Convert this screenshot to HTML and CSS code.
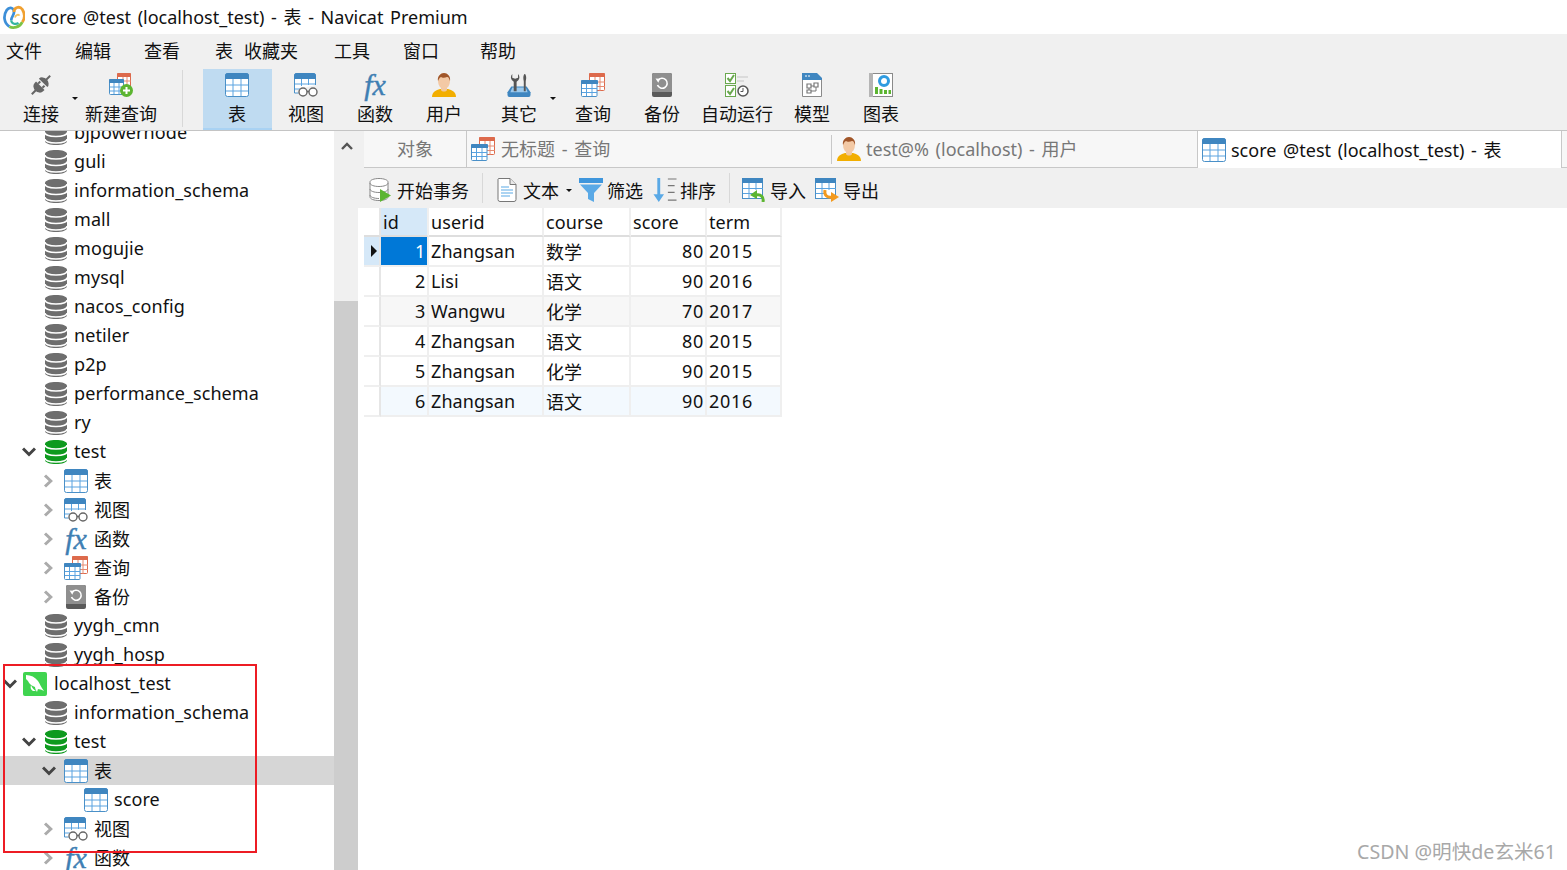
FILE: index.html
```html
<!DOCTYPE html>
<html lang="zh-CN">
<head>
<meta charset="utf-8">
<title>score @test (localhost_test) - 表 - Navicat Premium</title>
<link rel="stylesheet" href="styles.css">
</head>
<body>
<svg class="defs" aria-hidden="true">
  <symbol id="logo" viewBox="0 0 24 26">
    <path d="M7 23C1 19 0 11 4 5c3-4 8-3 8 2 0 4-3 5-3 9" fill="none" stroke="#3d8fd8" stroke-width="3"/>
    <path d="M12 7c0-5 6-7 9-3 3 5 3 10 0 14" fill="none" stroke="#f0a030" stroke-width="3"/>
    <path d="M21 18c-3 6-10 7-14 5" fill="none" stroke="#7cc444" stroke-width="3"/>
    <path d="M9 16c0 4 5 5 8 3" fill="none" stroke="#35b5a0" stroke-width="2.4"/>
    <path d="M13 13c1-3 4-4 5-2" fill="none" stroke="#f6c560" stroke-width="2"/>
  </symbol>
  <symbol id="tb" viewBox="0 0 24 24">
    <rect x=".5" y=".5" width="23" height="23" rx="2" fill="#fff" stroke="#4a90c8"/>
    <path d="M0 3a3 3 0 0 1 3-3h18a3 3 0 0 1 3 3v3H0z" fill="#3f86c0"/>
    <path d="M1 12h22M1 18h22M8 6v17M16 6v17" stroke="#5aa3e0" fill="none"/>
  </symbol>
  <symbol id="vw" viewBox="0 0 24 24">
    <path d="M.5 17V2.500a2 2 0 0 1 2-2h17a2 2 0 0 1 2 2V12M.5 17v3h4" fill="#fff" stroke="#4a90c8"/>
    <path d="M0 3a3 3 0 0 1 3-3h16a3 3 0 0 1 3 3v3H0z" fill="#3f86c0"/>
    <path d="M1 11h20M1 16h5M7.500 6v7M14.500 6v6" stroke="#5aa3e0" fill="none"/>
    <circle cx="9" cy="19" r="4" fill="#fff" stroke="#666" stroke-width="1.400"/>
    <circle cx="19" cy="19" r="4" fill="#fff" stroke="#666" stroke-width="1.400"/>
    <path d="M13 18.500h2" stroke="#666" stroke-width="1.400"/>
  </symbol>
  <symbol id="qr" viewBox="0 0 24 24">
    <rect x="8.500" y=".5" width="15" height="17" rx="1" fill="#fff" stroke="#dd6a4c"/>
    <path d="M8 1a1 1 0 0 1 1-1h14a1 1 0 0 1 1 1v3H8z" fill="#dd6a4c"/>
    <path d="M8 9h16M8 13.500h16M14 4v14M19 4v14" stroke="#e58a70" fill="none"/>
    <rect x=".5" y="7.500" width="15.500" height="16" rx="1" fill="#fff" stroke="#4a90c8"/>
    <path d="M0 8a1 1 0 0 1 1-1h15a1 1 0 0 1 1 1v3H0z" fill="#3f86c0"/>
    <path d="M1 15.500h15M1 19.500h15M5.500 11v12M11 11v12" stroke="#5aa3e0" fill="none"/>
  </symbol>
  <symbol id="nq" viewBox="0 0 24 24">
    <rect x="8.500" y=".5" width="13" height="14" rx="1" fill="#fff" stroke="#dd6a4c"/>
    <path d="M8 1a1 1 0 0 1 1-1h12a1 1 0 0 1 1 1v3H8z" fill="#dd6a4c"/>
    <path d="M8 8h14M14 4v10M18 4v10" stroke="#e58a70" fill="none"/>
    <rect x=".5" y="6.500" width="14" height="15" rx="1" fill="#fff" stroke="#4a90c8"/>
    <path d="M0 7a1 1 0 0 1 1-1h13a1 1 0 0 1 1 1v3H0z" fill="#3f86c0"/>
    <path d="M1 14h13M1 18h13M5 10v11M10 10v11" stroke="#5aa3e0" fill="none"/>
    <circle cx="17.500" cy="17.500" r="6.500" fill="#5cb531"/>
    <path d="M14 17.500h7M17.500 14v7" stroke="#fff" stroke-width="2"/>
  </symbol>
  <symbol id="bk" viewBox="0 0 20 24">
    <rect width="20" height="24" rx="2" fill="#5a5a5a"/>
    <path d="M0 2a2 2 0 0 1 2-2h16a2 2 0 0 1 2 2v17H0z" fill="#8f8f8f"/>
    <path d="M6 7.500a5 5 0 1 1-.5 4.500" fill="none" stroke="#fff" stroke-width="1.600"/>
    <path d="M3.500 5.500l4.500.3-1.700 4z" fill="#fff"/>
  </symbol>
  <symbol id="db" viewBox="0 0 22 24">
    <path d="M0 4c0-2.500 5-4 11-4s11 1.500 11 4v16c0 2.500-5 4-11 4S0 22.500 0 20z" fill="currentColor"/>
    <path d="M0 5c0 2.500 5 4 11 4s11-1.500 11-4M0 11.500c0 2.500 5 4 11 4s11-1.500 11-4M0 18c0 2.500 5 4 11 4s11-1.500 11-4" fill="none" stroke="#fff" stroke-width="1.500"/>
  </symbol>
  <symbol id="ms" viewBox="0 0 24 24">
    <rect width="24" height="24" rx="2" fill="#3fd44f"/>
    <path d="M3 3c5 0 9 2 12 6 2 3 3 6 6 10-3-2-4-1-6-2l-1 3c-1-2-2-3-2-5-3-1-6-3-7-6L3 7z" fill="#fff"/>
    <path d="M8 13c1 3 3 5 5 6l-3 0c-2-1-3-3-2-6z" fill="#fff"/>
  </symbol>
  <symbol id="us" viewBox="0 0 24 24">
    <path d="M0 24c0-5 4-7 8-8h8c4 1 8 3 8 8z" fill="#f2ae00"/>
    <path d="M9 13h6v4c-1 2-5 2-6 0z" fill="#f0c8a0"/>
    <ellipse cx="12" cy="8" rx="6" ry="8" fill="#f3c9a5"/>
    <path d="M6 8C5 3 9 0 12 0s7 3 6 8c-1-2-1-4-3-4-2 1-5 1-6 0-2 1-2 2-3 4z" fill="#a0562a"/>
  </symbol>
  <symbol id="pl" viewBox="0 0 24 24">
    <g transform="rotate(-45 12 12)" fill="#666">
      <rect x="-1" y="11" width="6" height="2"/>
      <path d="M4 12a5 6 0 0 1 5-6h2v12H9a5 6 0 0 1-5-6z"/>
      <rect x="11" y="8" width="3" height="2"/>
      <rect x="11" y="14" width="3" height="2"/>
      <path d="M15 6a5 6 0 0 1 0 12z"/>
      <rect x="19" y="11" width="6" height="2"/>
    </g>
  </symbol>
  <symbol id="ot" viewBox="0 0 24 25">
    <path d="M4 14h16l4 6v3a2 2 0 0 1-2 2H2a2 2 0 0 1-2-2v-3z" fill="#3f86c0"/>
    <path d="M5 15h14l2 5H3z" fill="#9cc9ec"/>
    <path d="M5 1a5 5 0 0 0 1.500 8V19h3V9A5 5 0 0 0 11 1v4l-3 1-3-1z" fill="#555"/>
    <path d="M16.500 5c0-2 .7-4 1.500-4s1.500 2 1.500 4-.5 3-.5 4v10h-2V9c0-1-.5-2-.5-4z" fill="#555"/>
  </symbol>
  <symbol id="au" viewBox="0 0 24 24">
    <rect x=".5" y=".5" width="10" height="10" fill="#fff" stroke="#6aa84f"/>
    <rect x=".5" y="12.500" width="10" height="11" fill="#fff" stroke="#6aa84f"/>
    <path d="M2.500 5l2.500 3 4-6M2.500 18l2.500 3 4-6" fill="none" stroke="#6aa84f" stroke-width="2"/>
    <path d="M12 4h11M12 8h7" stroke="#d4d4d4" stroke-width="1.500"/>
    <circle cx="18" cy="18" r="5" fill="#fff" stroke="#555" stroke-width="1.500"/>
    <path d="M18 15v3.500h-2.500" fill="none" stroke="#555"/>
  </symbol>
  <symbol id="md" viewBox="0 0 20 24">
    <path d="M.5.500h14l5 5v18H.5z" fill="#fff" stroke="#8a8a8a"/>
    <path d="M0 0h15l5 5v2H0z" fill="#3f86c0"/>
    <path d="M3 3h2M6 3h2" stroke="#fff"/>
    <path d="M5 11h4v4H5zM12 10h4v4h-4zM5 17h4v3H5z" fill="none" stroke="#777" stroke-width="1.200"/>
    <path d="M9 13h3M7 15v2M14 14v4H9" fill="none" stroke="#777"/>
  </symbol>
  <symbol id="ch" viewBox="0 0 24 24">
    <rect x=".5" y=".5" width="23" height="23" fill="#fff" stroke="#8a8a8a"/>
    <rect x="0" y="0" width="4" height="24" fill="#b5b5b5"/>
    <circle cx="15" cy="8" r="4.500" fill="none" stroke="#2f9be0" stroke-width="3"/>
    <path d="M6 21v-7h3v7zM10.500 21v-5h3v5zM15 21v-4h3v4zM19.500 21v-4h2.500v4z" fill="#5cb531"/>
  </symbol>
  <symbol id="tr" viewBox="0 0 22 24">
    <path d="M1 4c0-2 4-3.500 9-3.500S19 2 19 4v15c0 2-4 3.500-9 3.500S1 21 1 19z" fill="#fff" stroke="#888"/>
    <path d="M1 5c0 2 4 3.500 9 3.500S19 7 19 5M1 11c0 2 4 3.500 9 3.500S19 13 19 11M1 17c0 2 4 3.500 9 3.500" fill="none" stroke="#888"/>
    <path d="M11 11l11 6.500L11 24z" fill="#5cb531"/>
  </symbol>
  <symbol id="dc" viewBox="0 0 20 24">
    <path d="M1.500.500H13l6 6V21.500a2 2 0 0 1-2 2H3a2 2 0 0 1-2-2V1z" fill="#fff" stroke="#777"/>
    <path d="M13 .5v6h6" fill="#e8e8e8" stroke="#777"/>
    <path d="M4 9h8M4 12h12M4 15h12M4 18h9" stroke="#5aa9e6" stroke-width="1.200"/>
  </symbol>
  <symbol id="fl" viewBox="0 0 24 24">
    <path d="M0 0h24v5H0z" fill="#3f96dc"/>
    <path d="M1 6.500h22l-8 8.500v9l-6-3v-6z" fill="#5aa9e6"/>
  </symbol>
  <symbol id="so" viewBox="0 0 24 25">
    <path d="M4 0h3v17h4l-5.500 8L0 17h4z" fill="#5aa9e6"/>
    <path d="M15 1h9M15 8h7M15 15h7M15 23h9" stroke="#777" stroke-width="1.200"/>
  </symbol>
  <symbol id="im" viewBox="0 0 24 24">
    <rect x=".5" y=".5" width="20" height="20" fill="#fff" stroke="#4a90c8"/>
    <path d="M0 0h21v5H0z" fill="#3f86c0"/>
    <path d="M1 10.500h20M1 15.500h10M7 5v15M14 5v7" stroke="#5aa3e0" fill="none"/>
    <path d="M21 24c1-5-2-8-7-7" fill="none" stroke="#5cb531" stroke-width="3"/>
    <path d="M8 17l7-5v9z" fill="#5cb531"/>
  </symbol>
  <symbol id="ex" viewBox="0 0 24 24">
    <rect x=".5" y=".5" width="20" height="20" fill="#fff" stroke="#4a90c8"/>
    <path d="M0 0h21v5H0z" fill="#3f86c0"/>
    <path d="M1 10.500h20M1 15.500h8M7 5v15M14 5v7" stroke="#5aa3e0" fill="none"/>
    <path d="M10 12c-1 5 2 8 7 7" fill="none" stroke="#f39a1e" stroke-width="3"/>
    <path d="M24 19l-8-5v10z" fill="#f39a1e"/>
  </symbol>
  <symbol id="cr" viewBox="0 0 14 14">
    <path d="M3 1.500L8.800 7 3 12.500" fill="none" stroke="#ababab" stroke-width="3"/>
  </symbol>
  <symbol id="cd" viewBox="0 0 14 14">
    <path d="M1 3.500L7 9.500l6-6" fill="none" stroke="#444" stroke-width="3"/>
  </symbol>
</svg>

<div class="app">
  <header class="title">
    <svg class="logo"><use href="#logo"/></svg>
    <span>score @test (localhost_test) - 表 - Navicat Premium</span>
  </header>

  <nav class="menu">
    <span>文件</span><span>编辑</span><span>查看</span><span>表</span><span>收藏夹</span><span>工具</span><span>窗口</span><span>帮助</span>
  </nav>

  <div class="toolbar">
    <div class="tool w68"><svg class="ti"><use href="#pl"/></svg><span>连接</span><i class="tri tri-a"></i></div>
    <div class="tool w84 ml4"><svg class="ti"><use href="#nq"/></svg><span>新建查询</span></div>
    <div class="tsep"></div>
    <div class="tool w69 active"><svg class="ti"><use href="#tb"/></svg><span>表</span></div>
    <div class="tool w69"><svg class="ti"><use href="#vw"/></svg><span>视图</span></div>
    <div class="tool w69"><i class="fx ti">fx</i><span>函数</span></div>
    <div class="tool w69"><svg class="ti"><use href="#us"/></svg><span>用户</span></div>
    <div class="tool w80"><svg class="ti"><use href="#ot"/></svg><span>其它</span><i class="tri tri-b"></i></div>
    <div class="tool w68"><svg class="ti"><use href="#qr"/></svg><span>查询</span></div>
    <div class="tool w68 nudge"><svg class="ti"><use href="#bk"/></svg><span>备份</span></div>
    <div class="tool w84"><svg class="ti"><use href="#au"/></svg><span>自动运行</span></div>
    <div class="tool w66"><svg class="ti"><use href="#md"/></svg><span>模型</span></div>
    <div class="tool w72"><svg class="ti"><use href="#ch"/></svg><span>图表</span></div>
  </div>

  <div class="main">
    <aside class="tree">
      <div class="row d1"><i class="tw"></i><svg class="ico grey"><use href="#db"/></svg><span>bjpowernode</span></div>
      <div class="row d1"><i class="tw"></i><svg class="ico grey"><use href="#db"/></svg><span>guli</span></div>
      <div class="row d1"><i class="tw"></i><svg class="ico grey"><use href="#db"/></svg><span>information_schema</span></div>
      <div class="row d1"><i class="tw"></i><svg class="ico grey"><use href="#db"/></svg><span>mall</span></div>
      <div class="row d1"><i class="tw"></i><svg class="ico grey"><use href="#db"/></svg><span>mogujie</span></div>
      <div class="row d1"><i class="tw"></i><svg class="ico grey"><use href="#db"/></svg><span>mysql</span></div>
      <div class="row d1"><i class="tw"></i><svg class="ico grey"><use href="#db"/></svg><span>nacos_config</span></div>
      <div class="row d1"><i class="tw"></i><svg class="ico grey"><use href="#db"/></svg><span>netiler</span></div>
      <div class="row d1"><i class="tw"></i><svg class="ico grey"><use href="#db"/></svg><span>p2p</span></div>
      <div class="row d1"><i class="tw"></i><svg class="ico grey"><use href="#db"/></svg><span>performance_schema</span></div>
      <div class="row d1"><i class="tw"></i><svg class="ico grey"><use href="#db"/></svg><span>ry</span></div>
      <div class="row d1"><svg class="tw"><use href="#cd"/></svg><svg class="ico green"><use href="#db"/></svg><span>test</span></div>
      <div class="row d2"><svg class="tw"><use href="#cr"/></svg><svg class="ico"><use href="#tb"/></svg><span>表</span></div>
      <div class="row d2"><svg class="tw"><use href="#cr"/></svg><svg class="ico"><use href="#vw"/></svg><span>视图</span></div>
      <div class="row d2"><svg class="tw"><use href="#cr"/></svg><i class="fx ico">fx</i><span>函数</span></div>
      <div class="row d2"><svg class="tw"><use href="#cr"/></svg><svg class="ico"><use href="#qr"/></svg><span>查询</span></div>
      <div class="row d2"><svg class="tw"><use href="#cr"/></svg><svg class="ico"><use href="#bk"/></svg><span>备份</span></div>
      <div class="row d1"><i class="tw"></i><svg class="ico grey"><use href="#db"/></svg><span>yygh_cmn</span></div>
      <div class="row d1"><i class="tw"></i><svg class="ico grey"><use href="#db"/></svg><span>yygh_hosp</span></div>
      <div class="row d0"><svg class="tw"><use href="#cd"/></svg><svg class="ico"><use href="#ms"/></svg><span>localhost_test</span></div>
      <div class="row d1"><i class="tw"></i><svg class="ico grey"><use href="#db"/></svg><span>information_schema</span></div>
      <div class="row d1"><svg class="tw"><use href="#cd"/></svg><svg class="ico green"><use href="#db"/></svg><span>test</span></div>
      <div class="row d2 selected"><svg class="tw"><use href="#cd"/></svg><svg class="ico"><use href="#tb"/></svg><span>表</span></div>
      <div class="row d3"><i class="tw"></i><svg class="ico"><use href="#tb"/></svg><span>score</span></div>
      <div class="row d2"><svg class="tw"><use href="#cr"/></svg><svg class="ico"><use href="#vw"/></svg><span>视图</span></div>
      <div class="row d2"><svg class="tw"><use href="#cr"/></svg><i class="fx ico">fx</i><span>函数</span></div>
    </aside>

    <div class="scroll">
      <div class="track"><svg class="sb-up" viewBox="0 0 14 10"><path d="M2 8l5-5 5 5" fill="none" stroke="#555" stroke-width="2.400"/></svg></div>
      <div class="thumb"></div>
    </div>

    <section class="content">
      <div class="head">
        <div class="tabs">
          <div class="tab tab-obj"><span>对象</span></div>
          <div class="tab tab-query"><svg class="tab-ico"><use href="#qr"/></svg><span>无标题 - 查询</span></div>
          <div class="tab tab-user"><svg class="tab-ico"><use href="#us"/></svg><span>test@% (localhost) - 用户</span></div>
          <div class="tab tab-active"><svg class="tab-ico"><use href="#tb"/></svg><span>score @test (localhost_test) - 表</span></div>
        </div>
        <div class="bar">
          <div class="btn g6"><svg class="bi w22"><use href="#tr"/></svg><span>开始事务</span></div>
          <div class="bsep"></div>
          <div class="btn g6 ml1"><svg class="bi w20"><use href="#dc"/></svg><span>文本</span><i class="tri tri-c"></i></div>
          <div class="btn g4 ml7"><svg class="bi"><use href="#fl"/></svg><span>筛选</span></div>
          <div class="btn g3 ml10"><svg class="bi"><use href="#so"/></svg><span>排序</span></div>
          <div class="bsep bsep-tight"></div>
          <div class="btn g4"><svg class="bi"><use href="#im"/></svg><span>导入</span></div>
          <div class="btn g4 ml9"><svg class="bi"><use href="#ex"/></svg><span>导出</span></div>
        </div>
      </div>
      <div class="grid-wrap">
        <table class="grid">
          <colgroup><col class="c0"><col class="c1"><col class="c2"><col class="c3"><col class="c4"><col class="c5"></colgroup>
          <thead>
            <tr><th class="rh"></th><th class="hl">id</th><th>userid</th><th>course</th><th>score</th><th>term</th></tr>
          </thead>
          <tbody>
            <tr><td class="rh cur"><i class="ptr"></i></td><td class="num sel">1</td><td>Zhangsan</td><td>数学</td><td class="num">80</td><td class="yr">2015</td></tr>
            <tr><td class="rh"></td><td class="num">2</td><td>Lisi</td><td>语文</td><td class="num">90</td><td class="yr">2016</td></tr>
            <tr class="alt"><td class="rh"></td><td class="num">3</td><td>Wangwu</td><td>化学</td><td class="num">70</td><td class="yr">2017</td></tr>
            <tr><td class="rh"></td><td class="num">4</td><td>Zhangsan</td><td>语文</td><td class="num">80</td><td class="yr">2015</td></tr>
            <tr><td class="rh"></td><td class="num">5</td><td>Zhangsan</td><td>化学</td><td class="num">90</td><td class="yr">2015</td></tr>
            <tr class="tint"><td class="rh"></td><td class="num">6</td><td>Zhangsan</td><td>语文</td><td class="num">90</td><td class="yr">2016</td></tr>
          </tbody>
        </table>
      </div>
    </section>
  </div>

  <div class="redbox"></div>
  <div class="watermark">CSDN @明快de玄米61</div>
</div>
</body>
</html>
```

FILE: styles.css
```css
* { box-sizing: border-box; }
html, body { margin: 0; height: 100%; overflow: hidden; }
body {
  font-family: "Noto Sans", "Noto Sans CJK SC", sans-serif;
  font-size: 18px;
  color: #111;
  background: #fff;
}
.defs { position: absolute; width: 0; height: 0; }
.fx {
  display: block;
  font-family: "Liberation Serif", serif;
  font-style: italic;
  font-size: 30px;
  line-height: 24px;
  text-align: center;
  color: #3f7fb3;
  -webkit-text-stroke: .4px #3f7fb3;
  overflow: visible;
}
.app { position: relative; display: flex; flex-direction: column; height: 870px; overflow: hidden; }

.title { height: 34px; display: flex; align-items: center; padding-left: 3px; gap: 6px; flex: none; word-spacing: 2px; }
.title span { padding-bottom: 2px; }
.logo { width: 22px; height: 25px; }

.menu { height: 34px; flex: none; display: flex; align-items: center; padding: 0 0 2px 6px; background: #f0f0f0; }
.menu span:nth-child(1), .menu span:nth-child(2), .menu span:nth-child(6) { width: 69px; }
.menu span:nth-child(3) { width: 71px; }
.menu span:nth-child(4) { width: 29px; }
.menu span:nth-child(5) { width: 90px; }
.menu span:nth-child(7) { width: 77px; }

.toolbar { height: 63px; flex: none; display: flex; padding-left: 7px; background: #f0f0f0; border-bottom: 1px solid #c4c4c4; }
.tool { position: relative; height: 61px; margin-top: 1px; padding-top: 4px; display: flex; flex-direction: column; align-items: center; gap: 4px; white-space: nowrap; line-height: 26px; }
.ti { width: 24px; height: 24px; flex: none; }
.w66 { width: 66px; } .w68 { width: 68px; } .w69 { width: 69px; padding-right: 1px; } .w72 { width: 72px; } .w80 { width: 80px; } .w84 { width: 84px; }
.ml1 { margin-left: 1px; }
.ml4 { margin-left: 4px; }
.nudge { padding-left: 2px; }
.active { background: #bfdbf1; border-bottom: 2px solid #a9d2f3; }
.tsep { width: 1px; height: 57px; margin: 2px 20px 0 19px; background: #d8d8d8; }
.tri { display: block; width: 0; height: 0; border-left: 3px solid transparent; border-right: 3px solid transparent; border-top: 3px solid #111; }
.tri-a, .tri-b { position: absolute; top: 28px; }
.tri-a { right: -3px; }
.tri-b { right: 3px; }

.main { flex: 1; display: flex; min-height: 0; }
.tree { width: 334px; flex: none; overflow: hidden; background: #fff; }
.row { height: 29px; display: flex; align-items: center; white-space: nowrap; }
.row span { padding-bottom: 2px; letter-spacing: .08px; }
.row:first-child { margin-top: -13px; }
.row.selected { background: #d6d6d6; }
.tw { width: 14px; height: 14px; flex: none; margin-right: 8px; display: block; }
.ico { width: 24px; height: 24px; flex: none; margin-right: 6px; }
.d0 { padding-left: 3px; }
.d0 .tw { margin-right: 6px; }
.d0 .ico { margin-right: 7px; }
.d1 { padding-left: 22px; }
.d2 { padding-left: 42px; }
.d3 { padding-left: 62px; }
.grey { color: #6e6e6e; }
.green { color: #0e9a1e; }

.scroll { width: 24px; flex: none; display: flex; flex-direction: column; background: #f0f0f0; }
.track { height: 170px; flex: none; padding: 10px 4px 0 6px; }
.sb-up { display: block; width: 14px; height: 10px; }
.thumb { flex: 1; background: #cdcdcd; }

.content { flex: 1; min-width: 0; display: flex; flex-direction: column; }
.head { padding-left: 6px; background: #f0f0f0; flex: none; }
.tabs { height: 37px; display: flex; background: #f7f7f7; border-bottom: 1px solid #c8c8c8; color: #777; white-space: nowrap; word-spacing: 2px; }
.tab { display: flex; align-items: center; height: 36px; position: relative; }
.tab span { padding-bottom: 2px; }
.tab-obj { width: 103px; justify-content: center; border-right: 1px solid #c8c8c8; }
.tab-query { width: 365px; padding-left: 4px; gap: 6px; }
.tab-query::after { content: ""; position: absolute; right: 0; top: 4px; bottom: 3px; width: 1px; background: #c8c8c8; }
.tab-user { width: 365px; padding-left: 5px; gap: 5px; }
.tab-active { width: 365px; height: 37px; padding-left: 4px; gap: 5px; background: #fff; color: #111; border-left: 1px solid #c8c8c8; border-right: 1px solid #c8c8c8; }
.tab-ico { width: 24px; height: 24px; flex: none; }

.bar { height: 40px; display: flex; align-items: center; padding: 4px 0 0 5px; white-space: nowrap; }
.btn { display: flex; align-items: center; }
.bi { width: 24px; height: 24px; flex: none; }
.bi.w22 { width: 22px; }
.bi.w20 { width: 20px; }
.g3 { gap: 3px; } .g4 { gap: 4px; } .g6 { gap: 6px; }
.ml7 { margin-left: 7px; } .ml9 { margin-left: 9px; } .ml10 { margin-left: 10px; }
.bsep { width: 1px; height: 30px; margin: -4px 13px 0; background: #d8d8d8; }
.bsep-tight { margin-right: 12px; }
.tri-c { margin-left: 1px; }

.grid-wrap { flex: 1; padding-left: 6px; background: #fff; }
.grid { table-layout: fixed; width: 418px; border-collapse: separate; border-spacing: 0; }
.c0 { width: 17px; } .c1 { width: 48px; } .c2 { width: 115px; } .c3 { width: 87px; } .c4 { width: 76px; } .c5 { width: 75px; }
.grid th, .grid td { padding: 0 2px; border-right: 2px solid #efefef; border-bottom: 2px solid #efefef; font-weight: 400; text-align: left; overflow: hidden; white-space: nowrap; letter-spacing: .08px; }
.grid th { height: 29px; border-bottom-color: #dedede; }
.grid td { height: 30px; }
.grid .rh { padding: 0; border-right-color: #e6e6e6; }
.grid td.num { text-align: right; padding-right: 1px; letter-spacing: .7px; }
.grid td.yr { letter-spacing: .7px; }
.hl { background: #d5e8f8; }
.grid td.sel { background: #0078d7; color: #fff; }
.grid td.cur { background: #d5e8f8; }
.ptr { display: block; width: 0; height: 0; margin-left: 7px; border-top: 6px solid transparent; border-bottom: 6px solid transparent; border-left: 6px solid #111; }
.alt td { background: #f7f7f7; }
.tint td { background: #f3f9fe; }
.alt .rh, .tint .rh { background: #fff; }

.redbox { position: absolute; left: 3px; top: 664px; width: 254px; height: 189px; border: 2px solid #ed1c24; pointer-events: none; }
.watermark { position: absolute; right: 11px; top: 838px; color: #a8a8a8; font-size: 19.6px; line-height: 28px; white-space: nowrap; }
```
